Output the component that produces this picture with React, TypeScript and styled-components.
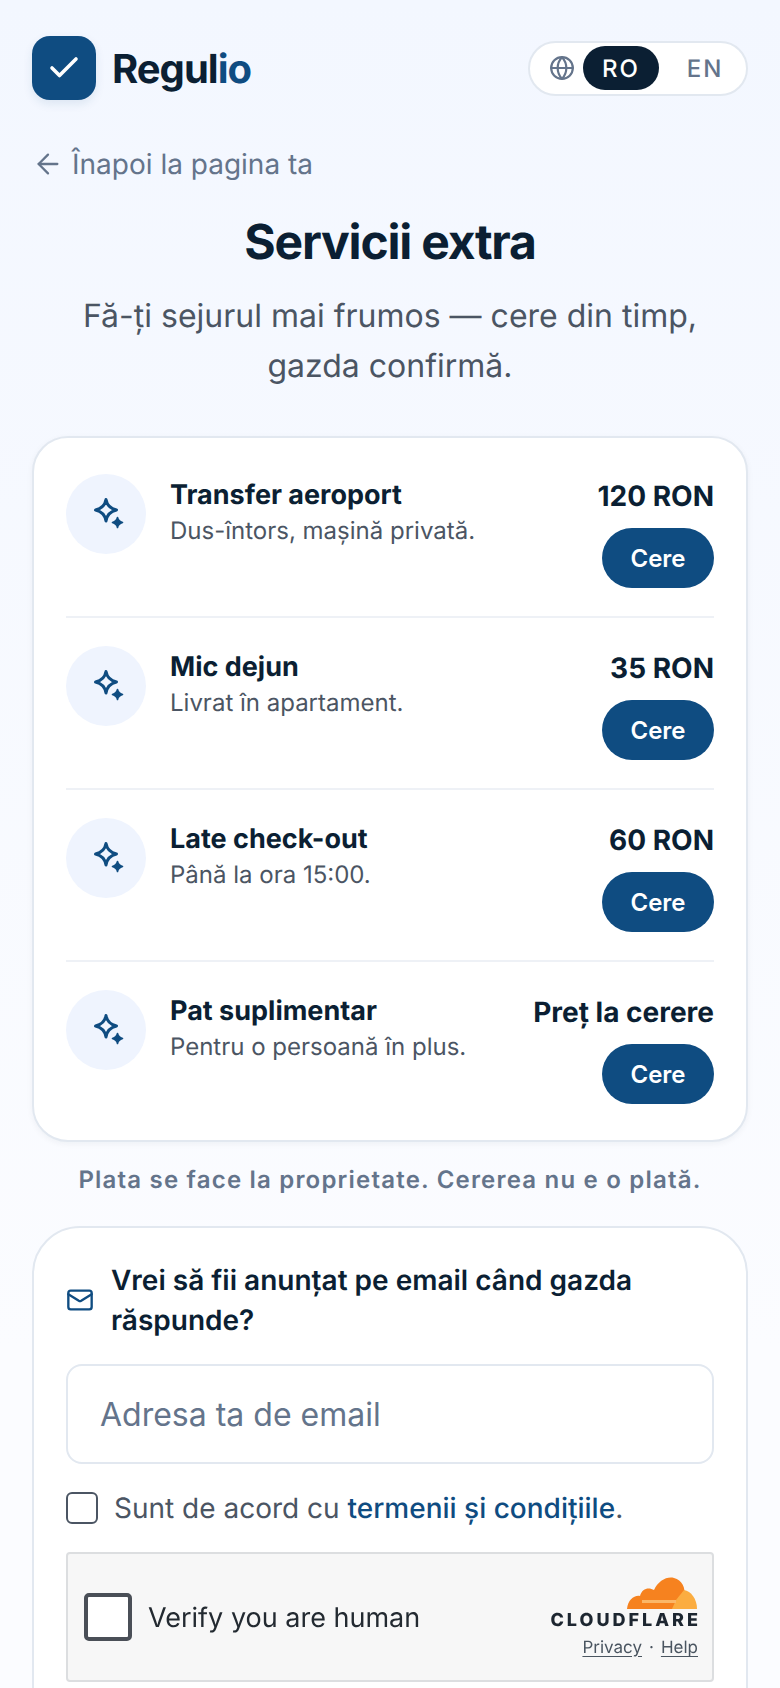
import { ArrowLeft, Check, Globe, Mail } from 'lucide-react'
import styled, { createGlobalStyle } from 'styled-components'

const GlobalStyle = createGlobalStyle`
  html, body {
    margin: 0;
    padding: 0;
    background: #f9fbff;
  }
  * {
    box-sizing: border-box;
  }
`

const Page = styled.div`
  width: 780px;
  height: 1688px;
  overflow: hidden;
  padding: 36px 32px 0;
  background: linear-gradient(180deg, #f3f7ff 0%, #fbfcff 80%);
  font-family: Inter, "Noto Sans", sans-serif;
  color: #0b1f33;
  text-rendering: geometricPrecision;
`

const Header = styled.header`
  display: flex;
  align-items: center;
  justify-content: space-between;
`

const Brand = styled.div`
  display: flex;
  align-items: center;
  gap: 16px;
`

const LogoBox = styled.div`
  width: 64px;
  height: 64px;
  border-radius: 18px;
  background: #0f4c81;
  color: #fff;
  display: flex;
  align-items: center;
  justify-content: center;
  box-shadow: 0 4px 10px rgba(15, 76, 129, 0.1);
`

const BrandName = styled.div`
  font-size: 40px;
  font-weight: 700;
  letter-spacing: -1px;
  span {
    color: #0f4c81;
  }
`

const LangToggle = styled.div`
  width: 220px;
  height: 55px;
  border: 2px solid #e2e8f0;
  border-radius: 28px;
  background: #fff;
  display: flex;
  align-items: center;
  gap: 8px;
  padding-left: 19px;
  color: #64748b;
`

const LangOption = styled.div<{ $active?: boolean }>`
  width: 76px;
  height: 44px;
  border-radius: 22px;
  display: flex;
  align-items: center;
  justify-content: center;
  font-size: 24px;
  font-weight: 500;
  letter-spacing: 2px;
  background: ${p => (p.$active ? '#0b1f33' : 'transparent')};
  color: ${p => (p.$active ? '#fff' : '#64748b')};
`

const BackLink = styled.a`
  display: flex;
  align-items: center;
  gap: 8px;
  margin-top: 44px;
  height: 40px;
  font-size: 28px;
  color: #64748b;
`

const Title = styled.h1`
  margin: 28px 0 0;
  text-align: center;
  font-size: 48px;
  line-height: 60px;
  font-weight: 700;
  letter-spacing: -1.2px;
`

const Subtitle = styled.p`
  margin: 19px auto 0;
  width: 640px;
  text-align: center;
  font-size: 32px;
  line-height: 50px;
  color: #4b5563;
`

const Card = styled.section`
  margin-top: 45px;
  padding: 8px 32px;
  background: #fff;
  border: 2px solid #e2e8f0;
  border-radius: 36px;
  box-shadow: 0 2px 6px rgba(11, 31, 51, 0.05);
`

const Row = styled.div`
  display: flex;
  align-items: flex-start;
  gap: 24px;
  padding: 28px 0;
  border-top: 2px solid #eef1f6;
  &:first-child {
    border-top: none;
  }
`

const IconCircle = styled.div`
  flex: none;
  width: 80px;
  height: 80px;
  border-radius: 50%;
  background: #eff4fe;
  display: flex;
  align-items: center;
  justify-content: center;
`

const RowBody = styled.div`
  flex: 1;
  padding-top: 2px;
`

const RowTitle = styled.div`
  font-size: 27px;
  line-height: 38px;
  font-weight: 700;
`

const RowText = styled.div`
  font-size: 24px;
  line-height: 34px;
  color: #4b5563;
`

const RowSide = styled.div`
  display: flex;
  flex-direction: column;
  align-items: flex-end;
  gap: 10px;
`

const Price = styled.div`
  font-size: 28px;
  line-height: 44px;
  font-weight: 700;
`

const RequestButton = styled.button`
  width: 112px;
  height: 60px;
  border: none;
  border-radius: 30px;
  background: #0f4c81;
  color: #fff;
  font-family: inherit;
  font-size: 24px;
  font-weight: 600;
`

const Note = styled.p`
  margin: 22px 0 0;
  text-align: center;
  font-size: 24px;
  line-height: 32px;
  font-weight: 600;
  letter-spacing: 1.2px;
  color: #64748b;
`

const EmailCard = styled.section`
  margin-top: 30px;
  padding: 32px 32px 0;
  height: 600px;
  background: #fff;
  border: 2px solid #e2e8f0;
  border-radius: 48px;
`

const EmailHead = styled.div`
  display: flex;
  align-items: center;
  gap: 17px;
  font-size: 28px;
  line-height: 40px;
  font-weight: 600;
  color: #0f4c81;
  span {
    color: #0b1f33;
  }
`

const MailIcon = styled(Mail)`
  flex: none;
`

const EmailInput = styled.input`
  display: block;
  width: 100%;
  height: 100px;
  margin-top: 24px;
  padding: 0 32px;
  border: 2px solid #e2e8f0;
  border-radius: 16px;
  background: #fff;
  font-family: inherit;
  font-size: 32px;
  outline: none;
  &::placeholder {
    color: #64748b;
    opacity: 1;
  }
`

const TermsRow = styled.label`
  display: flex;
  align-items: center;
  gap: 16px;
  margin-top: 24px;
  font-size: 28px;
  line-height: 40px;
  color: #4b5563;
  a {
    color: #0f4c81;
    font-weight: 500;
  }
`

const TermsBox = styled.span`
  width: 32px;
  height: 32px;
  border: 2px solid #4b5563;
  border-radius: 6px;
  background: #fff;
`

const Turnstile = styled.div`
  margin-top: 24px;
  height: 130px;
  background: #f7f7f7;
  border: 2px solid #dcdee0;
  border-radius: 4px;
  display: flex;
  align-items: center;
  justify-content: space-between;
  padding: 0 14px 0 16px;
  filter: blur(0.6px);
`

const Verify = styled.div`
  display: flex;
  align-items: center;
  gap: 16px;
  font-size: 27px;
  color: #232a31;
`

const VerifyBox = styled.span`
  width: 48px;
  height: 48px;
  border: 4px solid #4a4f57;
  border-radius: 5px;
  background: #fff;
`

const CfBrand = styled.div`
  display: flex;
  flex-direction: column;
  align-items: flex-end;
`

const CfWord = styled.div`
  margin-top: 2px;
  font-size: 18px;
  line-height: 18px;
  font-weight: 800;
  letter-spacing: 3px;
  margin-right: -3px;
  color: #1d2630;
`

const CfLinks = styled.div`
  margin-top: 8px;
  font-size: 17px;
  line-height: 20px;
  color: #4a5560;
  u {
    text-underline-offset: 3px;
  }
`

const CfDot = styled.span`
  margin: 0 7px;
`

function SparkIcon() {
  return (
    <svg width="36" height="34" viewBox="0 0 36 34" fill="none">
      <path
        d="M18 2.5C19 8.5 22 11.5 28.5 13C22 14.5 19 17.5 18 24C17 17.5 14 14.5 7.5 13C14 11.5 17 8.5 18 2.5Z"
        stroke="#0f4c81"
        strokeWidth="3"
        strokeLinejoin="round"
      />
      <path
        d="M29.5 20.5C30 23 31 24.5 34.5 25.5C31 26.5 30 28 29.5 30.5C29 28 28 26.5 24.5 25.5C28 24.5 29 23 29.5 20.5Z"
        fill="#0f4c81"
        stroke="#0f4c81"
        strokeWidth="1.6"
        strokeLinejoin="round"
      />
    </svg>
  )
}

function CloudIcon() {
  return (
    <svg width="72" height="34" viewBox="0 0 72 34">
      <path
        d="M1 33C2 24 8 19 14 20C16 12 23 11 28 14C32 5 41 0 48 2C56 4 60 12 58 20L56 33Z"
        fill="#f6821f"
      />
      <path d="M58 14C65 15 71 23 71 33H46L50 24Z" fill="#fbad41" />
      <path d="M16 24H50V27H16Z" fill="#fbb768" />
    </svg>
  )
}

const services = [
  { title: 'Transfer aeroport', text: 'Dus-întors, mașină privată.', price: '120 RON' },
  { title: 'Mic dejun', text: 'Livrat în apartament.', price: '35 RON' },
  { title: 'Late check-out', text: 'Până la ora 15:00.', price: '60 RON' },
  { title: 'Pat suplimentar', text: 'Pentru o persoană în plus.', price: 'Preț la cerere' },
]

function App() {
  return (
    <Page>
      <GlobalStyle />
      <Header>
        <Brand>
          <LogoBox>
            <Check size={36} strokeWidth={2.4} />
          </LogoBox>
          <BrandName>
            Regul<span>io</span>
          </BrandName>
        </Brand>
        <LangToggle>
          <Globe size={26} strokeWidth={2} />
          <LangOption $active>RO</LangOption>
          <LangOption>EN</LangOption>
        </LangToggle>
      </Header>

      <BackLink>
        <ArrowLeft size={32} strokeWidth={1.7} />
        Înapoi la pagina ta
      </BackLink>

      <Title>Servicii extra</Title>
      <Subtitle>Fă-ți sejurul mai frumos — cere din timp, gazda confirmă.</Subtitle>

      <Card>
        {services.map(s => (
          <Row key={s.title}>
            <IconCircle>
              <SparkIcon />
            </IconCircle>
            <RowBody>
              <RowTitle>{s.title}</RowTitle>
              <RowText>{s.text}</RowText>
            </RowBody>
            <RowSide>
              <Price>{s.price}</Price>
              <RequestButton>Cere</RequestButton>
            </RowSide>
          </Row>
        ))}
      </Card>

      <Note>Plata se face la proprietate. Cererea nu e o plată.</Note>

      <EmailCard>
        <EmailHead>
          <MailIcon size={28} strokeWidth={2} />
          <span>Vrei să fii anunțat pe email când gazda răspunde?</span>
        </EmailHead>
        <EmailInput placeholder="Adresa ta de email" />
        <TermsRow>
          <TermsBox />
          <div>
            Sunt de acord cu <a>termenii și condițiile</a>.
          </div>
        </TermsRow>
        <Turnstile>
          <Verify>
            <VerifyBox />
            Verify you are human
          </Verify>
          <CfBrand>
            <CloudIcon />
            <CfWord>CLOUDFLARE</CfWord>
            <CfLinks>
              <u>Privacy</u>
              <CfDot>·</CfDot>
              <u>Help</u>
            </CfLinks>
          </CfBrand>
        </Turnstile>
      </EmailCard>
    </Page>
  )
}

export default App
